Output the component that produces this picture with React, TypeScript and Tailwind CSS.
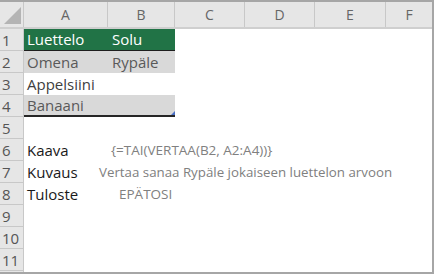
import { FC, ReactNode } from 'react';

const cols = ['A', 'B', 'C', 'D', 'E', 'F'];
const colW = ['w-[84px]', 'w-[67px]', 'w-[70px]', 'w-[70px]', 'w-[71px]', 'flex-1'];

const RowHead: FC<{ n: number }> = ({ n }) => (
  <div className="w-[24px] shrink-0 h-full bg-[#e6e6e6] border-r border-b border-[#c8c8c8] text-[#555] text-[15px] leading-[22px] pl-[2px]">
    {n}
  </div>
);

const Row: FC<{ n: number; children?: ReactNode }> = ({ n, children }) => (
  <div className="flex h-[22px]">
    <RowHead n={n} />
    <div className="flex-1 relative">{children}</div>
  </div>
);

const App: FC = () => {
  return (
    <div className="w-[435px] h-[276px] bg-white font-['Open_Sans',sans-serif]">
      <div className="w-[434px] h-[274px] border-t-2 border-r-2 border-b-2 border-[#a6a6a6] flex flex-col overflow-hidden">
        {/* column headers */}
        <div className="flex h-[27px] bg-[#e6e6e6] border-b-2 border-[#cfcfcf] shrink-0">
          <div className="w-[24px] shrink-0 border-r border-[#c8c8c8] relative">
            <svg className="absolute right-[2px] bottom-[3px]" width="17" height="17" viewBox="0 0 17 17">
              <polygon points="17,0 17,17 0,17" fill="#b4b4b4" />
            </svg>
          </div>
          {cols.map((c, i) => (
            <div
              key={c}
              className={`${colW[i]} shrink-0 flex items-center justify-center text-[14px] text-[#666] ${i < 5 ? 'border-r border-[#c8c8c8]' : ''}`}
            >
              {c}
            </div>
          ))}
        </div>

        <Row n={1}>
          <div className="flex h-full w-[151px] bg-[#217346] border-b border-[#1e1e1e] text-white text-[15px] leading-[21px]">
            <div className="w-[84px] pl-[3px]">Luettelo</div>
            <div className="pl-[4px]">Solu</div>
          </div>
        </Row>
        <Row n={2}>
          <div className="flex h-full w-[151px] bg-[#d9d9d9] text-[#595959] text-[15px] leading-[22px]">
            <div className="w-[84px] pl-[3px]">Omena</div>
            <div className="pl-[4px]">Rypäle</div>
          </div>
        </Row>
        <Row n={3}>
          <div className="h-full w-[151px] text-[#404040] text-[15px] leading-[22px] pl-[3px]">Appelsiini</div>
        </Row>
        <Row n={4}>
          <div className="relative h-full w-[151px] bg-[#d9d9d9] border-b-2 border-[#262626] text-[#595959] text-[15px] leading-[20px] pl-[3px]">
            Banaani
            <span className="absolute right-0 bottom-0 w-0 h-0 border-l-[4px] border-l-transparent border-b-[4px] border-b-[#4a6fc4]" />
          </div>
        </Row>
        <Row n={5} />
        <Row n={6}>
          <div className="flex h-full text-[15px] leading-[22px]">
            <div className="w-[87px] pl-[3px] text-[#1a1a1a] shrink-0">Kaava</div>
            <div className="text-[#808080] text-[13.5px] whitespace-nowrap">{'{=TAI(VERTAA(B2, A2:A4))}'}</div>
          </div>
        </Row>
        <Row n={7}>
          <div className="flex h-full text-[15px] leading-[22px]">
            <div className="w-[75px] pl-[3px] text-[#1a1a1a] shrink-0">Kuvaus</div>
            <div className="text-[#808080] text-[13.3px] whitespace-nowrap">Vertaa sanaa Rypäle jokaiseen luettelon arvoon</div>
          </div>
        </Row>
        <Row n={8}>
          <div className="flex h-full text-[15px] leading-[22px]">
            <div className="w-[95px] pl-[3px] text-[#1a1a1a] shrink-0">Tuloste</div>
            <div className="text-[#808080] text-[13.5px] whitespace-nowrap">EPÄTOSI</div>
          </div>
        </Row>
        <Row n={9} />
        <Row n={10} />
        <Row n={11} />
        <div className="flex-1 flex">
          <div className="w-[24px] bg-[#e6e6e6] border-r border-[#c8c8c8]" />
        </div>
      </div>
    </div>
  );
};

export default App;
